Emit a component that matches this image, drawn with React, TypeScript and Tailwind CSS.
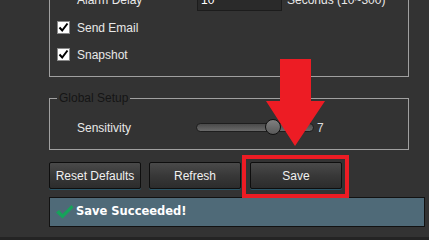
import React from "react";

function Check() {
  return (
    <div className="w-[13px] h-[13px] bg-white border border-[#8a8a8a] flex items-center justify-center shrink-0">
      <svg width="11" height="11" viewBox="0 0 11 11">
        <path d="M1.5 5.5 L4.2 8.5 L9.5 1.5" fill="none" stroke="#000" strokeWidth="2" />
      </svg>
    </div>
  );
}

function Btn({ label, className }: { label: string; className?: string }) {
  return (
    <div
      className={
        "w-[92px] h-[27px] rounded-[2px] border border-[#0e0e0e] bg-gradient-to-b from-[#4a4a4a] via-[#383838] to-[#2c2c2c] shadow-[0_1px_0_#2a5566] flex items-center justify-center text-[12px] text-[#f0f0f0] " +
        (className || "")
      }
    >
      {label}
    </div>
  );
}

export default function App() {
  return (
    <div
      className="relative w-[429px] h-[240px] overflow-hidden bg-[#333333] flex flex-col"
      style={{ fontFamily: '"Liberation Sans", Arial, sans-serif' }}
    >
      {/* top fieldset (cut off) */}
      <div className="ml-[49px] w-[360px] mt-[-14px] border-l border-r border-b border-[#a0a0a0] pb-[8px] text-[12px] text-[#e8e8e8]">
        <div className="h-[28px] flex items-center pl-[27px]">
          <span className="w-[120px]">Alarm Delay</span>
          <div className="w-[85px] h-[22px] bg-[#2a2a2a] border border-[#1c1c1c] flex items-center pl-[3px] text-white">10</div>
          <span className="ml-[5px]">Seconds (10~300)</span>
        </div>
        <div className="h-[27px] flex items-center pl-[7px] gap-[7px]">
          <Check />
          <span>Send Email</span>
        </div>
        <div className="h-[27px] flex items-center pl-[7px] gap-[7px]">
          <Check />
          <span>Snapshot</span>
        </div>
      </div>

      {/* Global setup */}
      <fieldset className="ml-[49px] w-[360px] mt-[14px] border border-[#a0a0a0] text-[12px] text-[#e8e8e8]">
        <legend className="ml-[7px] px-[2px] text-[#151515] text-[12px] leading-[14px]">Global Setup</legend>
        <div className="h-[44px] flex items-center pl-[27px] pt-[1px]">
          <span className="w-[119px]">Sensitivity</span>
          <div className="relative w-[118px] h-[9px] rounded-full border border-[#1e1e1e] bg-gradient-to-b from-[#4a4a4a] to-[#6a6a6a]">
            <div className="absolute left-[68px] top-[-5px] w-[16px] h-[16px] rounded-full border border-[#111] bg-gradient-to-b from-[#808080] to-[#5a5a5a]" />
          </div>
          <span className="ml-[3px] text-[#dddddd]">7</span>
        </div>
      </fieldset>

      {/* buttons */}
      <div className="ml-[49px] mt-[12px] flex">
        <Btn label="Reset Defaults" />
        <Btn label="Refresh" className="ml-[8px]" />
        <Btn label="Save" className="ml-[9px]" />
      </div>

      {/* status */}
      <div className="ml-[49px] mt-[8px] w-[376px] h-[30px] bg-[#4f6a78] border border-[#121212] flex items-center pl-[5px] gap-[2px]">
        <svg width="19" height="16" viewBox="0 0 19 16">
          <path d="M1 8.5 L4 6 L7.5 10 L16.5 1 L18.5 3.5 L7.5 14.5 Z" fill="#16a35a" />
        </svg>
        <span className="text-white font-bold text-[12px]" style={{ fontFamily: '"DejaVu Sans", Verdana, sans-serif', fontSize: "11.5px" }}>
          Save Succeeded!
        </span>
      </div>

      <div className="mt-auto h-[3px] bg-[#242424]" />

      {/* red highlight box */}
      <div className="absolute left-[242px] top-[155px] w-[107px] h-[43px] border-[4px] border-[#ed1c24]" />

      {/* red arrow */}
      <svg className="absolute left-0 top-0" width="429" height="240" viewBox="0 0 429 240">
        <polygon points="280,59 311,59 311,101 325,101 295,146 266,101 280,101" fill="#ed1c24" />
      </svg>
    </div>
  );
}
